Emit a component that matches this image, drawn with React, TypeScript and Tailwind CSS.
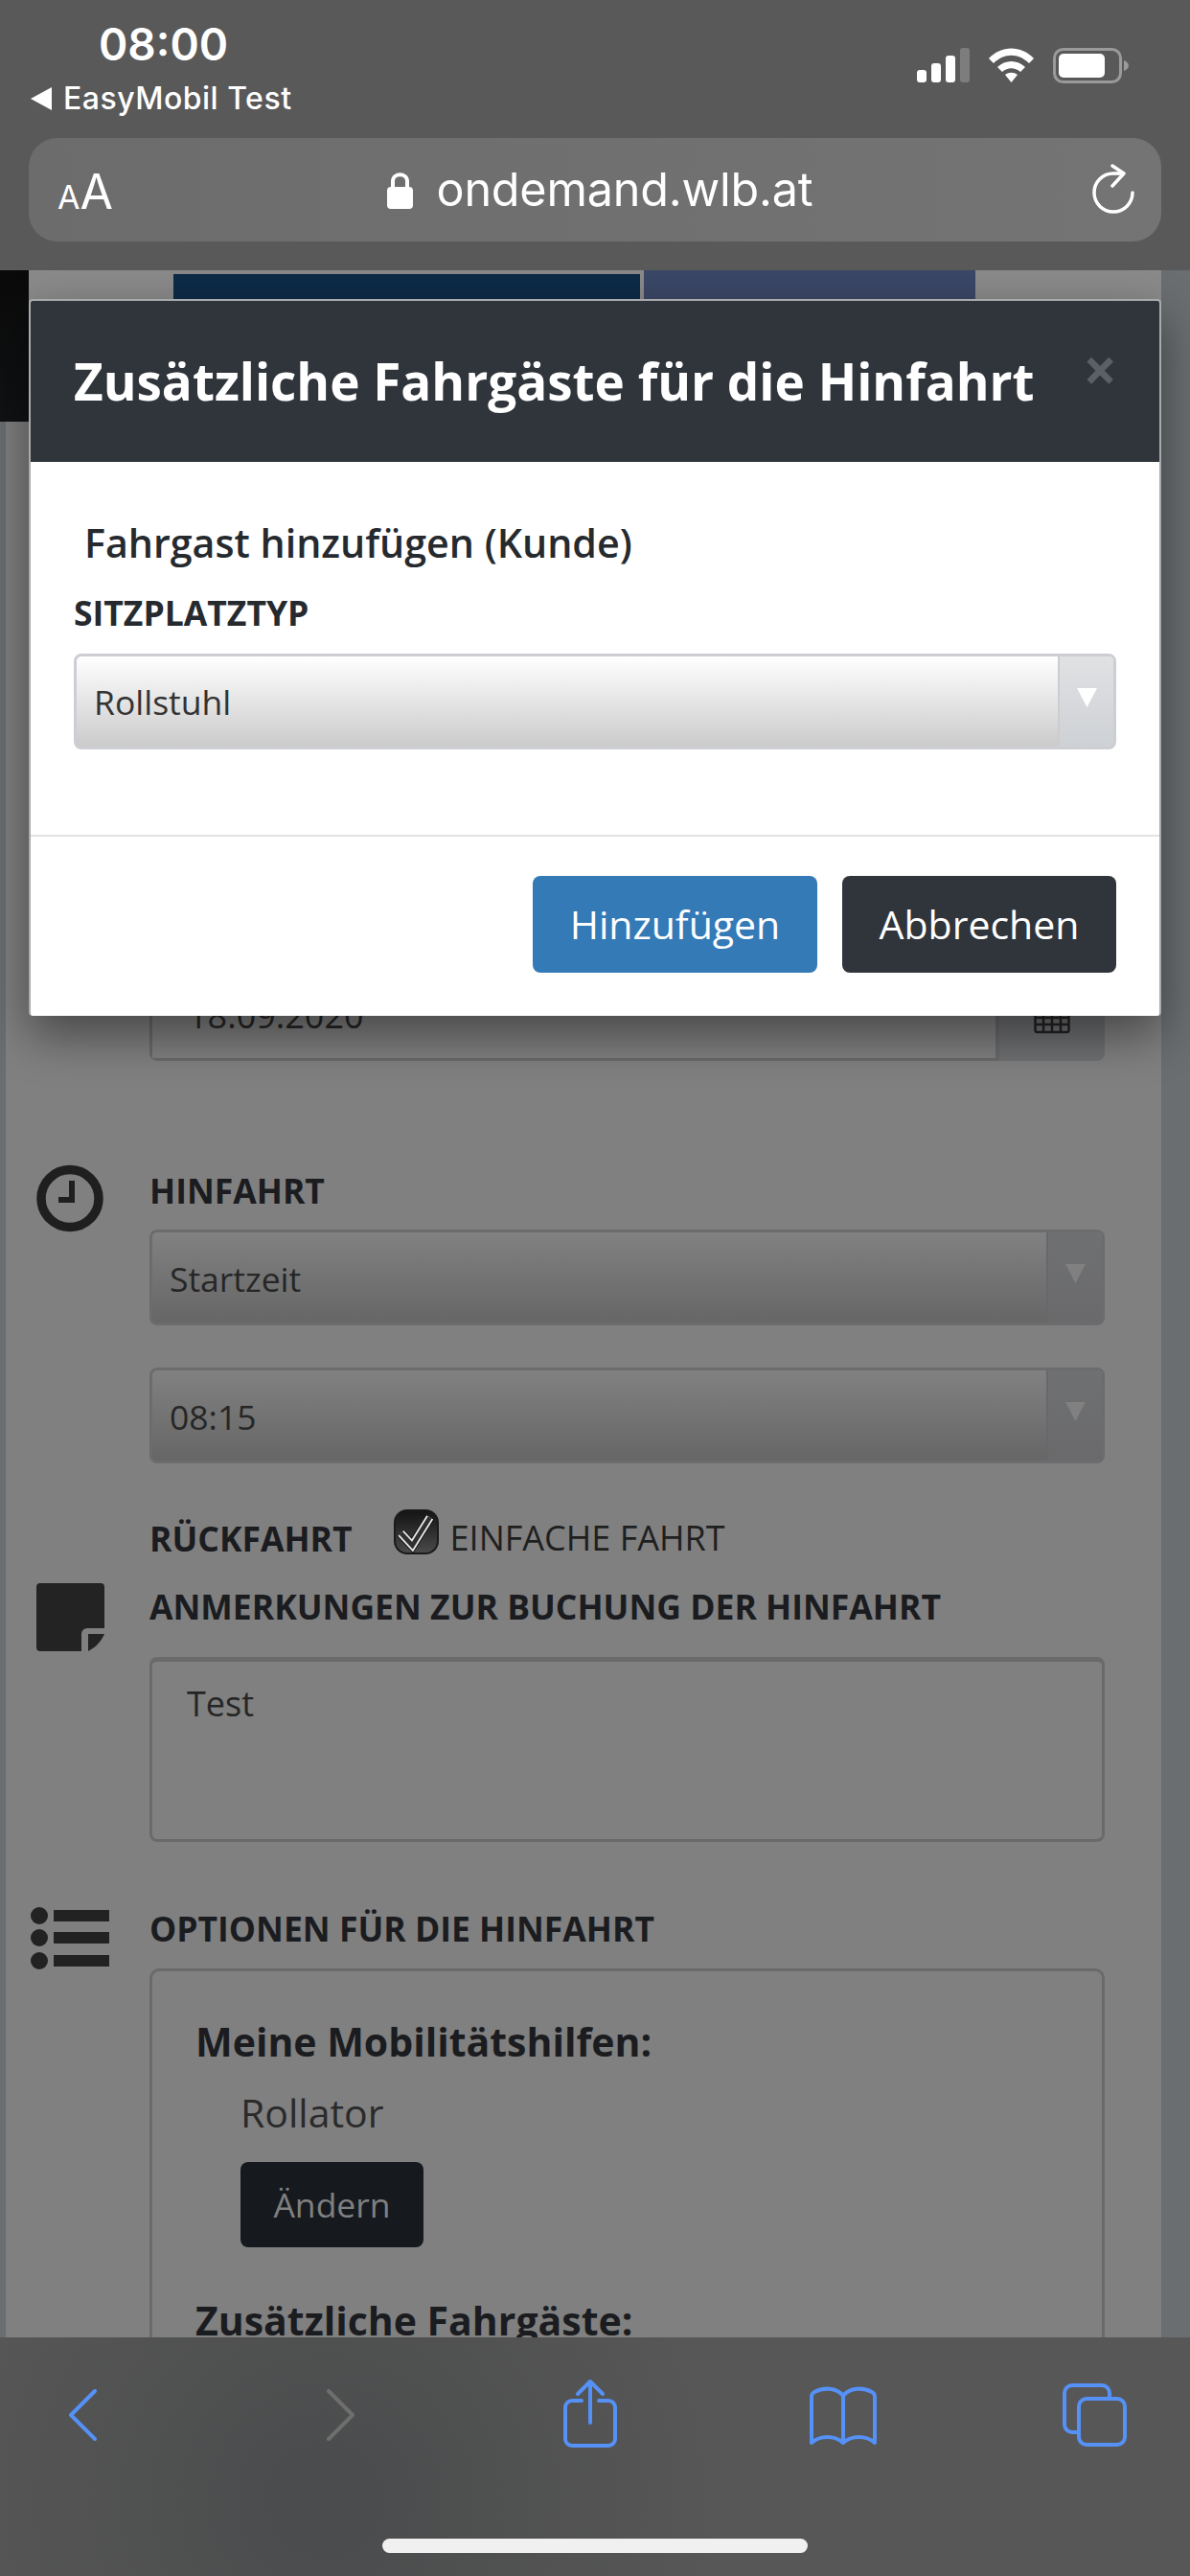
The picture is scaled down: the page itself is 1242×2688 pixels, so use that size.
import React from "react";

function SelectBox({ label, dim }: { label: string; dim?: boolean }) {
  return (
    <div className={dim
      ? "flex h-[100px] w-full overflow-hidden rounded-[8px] border-[3px] border-[#6c6c6e] bg-gradient-to-b from-[#818181] to-[#666666]"
      : "flex h-[100px] w-full overflow-hidden rounded-[8px] border-[3px] border-[#cdced3] bg-gradient-to-b from-[#ffffff] to-[#cbcbcb]"}>
      <div className={dim ? "flex flex-1 items-center pl-[18px] pt-[3px] text-[35.500px] text-[#262626]" : "flex flex-1 items-center pl-[18px] pt-[2px] text-[35.500px] text-[#333333]"}>{label}</div>
      <div className={dim
        ? "flex w-[58px] justify-center border-l-[2px] border-[#686868] bg-gradient-to-b from-[#6f7072] to-[#6a6a6c] pt-[33px]"
        : "flex w-[58px] justify-center border-l-[2px] border-[#cdcdd0] bg-gradient-to-b from-[#e0e1e3] to-[#ced1d5] pt-[33px]"}>
        <svg width="21" height="20" viewBox="0 0 21 20"><path d="M0 0H21L10.500 20Z" fill={dim ? "#808080" : "#ffffff"} /></svg>
      </div>
    </div>
  );
}

function Label({ children }: { children: React.ReactNode }) {
  return <div className="text-[35.5px] font-bold leading-[44px] text-[#1b1c20]">{children}</div>;
}

export default function App() {
  return (
    <div className="relative flex h-[2688px] w-[1242px] flex-col overflow-hidden bg-[#808080] font-['Open_Sans',sans-serif]">
      {/* Browser top */}
      <header className="relative z-20 flex h-[282px] shrink-0 flex-col bg-[#595959] px-[30px] font-['Inter',sans-serif] text-white">
        <div className="flex h-[144px] justify-between">
          <div className="flex flex-col">
            <div className="pl-[73px] pt-[18px] text-[46px] font-semibold leading-[56px]">08:00</div>
            <div className="mt-[10px] flex items-center gap-[12px] pl-[2px] text-[32px] font-medium leading-[38px] tracking-[0.5px]">
              <svg width="22" height="24" viewBox="0 0 22 24"><path d="M22 0V24L0 12Z" fill="#fff" /></svg>
              EasyMobil Test
            </div>
          </div>
          <div className="mr-[34px] flex items-start gap-[20px] pt-[50px]">
            <svg width="55" height="36" viewBox="0 0 55 36">
              <rect x="0" y="23" width="10" height="13" rx="3" fill="#fff" />
              <rect x="15" y="16" width="10" height="20" rx="3" fill="#fff" />
              <rect x="30" y="8" width="10" height="28" rx="3" fill="#fff" />
              <rect x="45" y="0" width="10" height="36" rx="3" fill="#7d7d7d" />
            </svg>
            <svg width="47" height="36" viewBox="0 0 47 36">
              <path d="M0 11C13-3 34-3 47 11L42 16C31 5 16 5 5 16Z" fill="#fff" />
              <path d="M9 20C17 12 30 12 38 20L33 25C27 20 20 20 14 25Z" fill="#fff" />
              <path d="M17 28C21 25 26 25 30 28L23.500 36Z" fill="#fff" />
            </svg>
            <svg width="79" height="37" viewBox="0 0 79 37">
              <rect x="1.500" y="1.500" width="69" height="34" rx="9" fill="none" stroke="#9a9a9a" strokeWidth="3" />
              <rect x="6" y="6" width="48" height="25" rx="5" fill="#fff" />
              <path d="M74 13C77 14 79 16 79 18.500C79 21 77 23 74 24Z" fill="#9a9a9a" />
            </svg>
          </div>
        </div>
        <div className="flex h-[108px] items-center rounded-[30px] bg-gradient-to-r from-[#6c6c6c] to-[#747474] pl-[30px] pr-[28px]">
          <div className="flex w-[120px] items-baseline pt-[4px] font-normal">
            <span className="text-[34px] leading-none">A</span>
            <span className="text-[50px] leading-none">A</span>
          </div>
          <div className="flex flex-1 items-center justify-center gap-[25px] pr-[68px]">
            <svg width="27" height="39" viewBox="0 0 27 39">
              <path d="M6 17V10C6 1 21 1 21 10V17" fill="none" stroke="#fff" strokeWidth="4" />
              <rect x="0" y="16" width="27" height="23" rx="4" fill="#fff" />
            </svg>
            <span className="text-[48.500px] leading-none tracking-[-0.2px]">ondemand.wlb.at</span>
          </div>
          <svg width="44" height="54" viewBox="0 0 44 54" fill="none" stroke="#fff" strokeWidth="3.500" strokeLinecap="round" strokeLinejoin="round">
            <path d="M42 30A20 20 0 1 1 22 10H32" />
            <path d="M21 2L33 10L21 23" />
          </svg>
        </div>
      </header>

      {/* Page content dimmed */}
      <main className="flex min-h-0 flex-1 overflow-hidden bg-[#808080]">
        <div className="flex w-[30px] shrink-0 flex-col">
          <div className="h-[158px] bg-gradient-to-b from-[#0a0a0a] to-[#111214]" />
          <div className="flex flex-1"><div className="w-[6px] bg-[#6a6e71]" /></div>
        </div>
        <div className="flex min-w-0 flex-1 flex-col">
          <div className="flex h-[32px] shrink-0 items-end bg-[#8a8a8a] pl-[151px]">
            <div className="h-[28px] w-[487px] bg-[#0d2a47]" />
            <div className="ml-[4px] h-[32px] w-[346px] bg-[#3a4766]" />
          </div>
          <div className="ml-[126px] mr-[59px] mt-[693px] flex h-[100px] shrink-0 overflow-hidden rounded-[8px]">
            <div className="flex-1 border-[3px] border-r-[4px] border-[#6a6a6a] pl-[37px] pt-[23px] text-[36px] text-[#262626]">18.09.2020</div>
            <div className="flex w-[110px] justify-center bg-[#6f7072] pt-[38px]">
              <svg width="38" height="34" viewBox="0 0 38 34" fill="none" stroke="#232323" strokeWidth="2.500"><rect x="1.500" y="2" width="35" height="30" rx="2" /><path d="M1 10H37M1 17H37M1 24H37M10 2V32M19 2V32M28 2V32" /></svg>
            </div>
          </div>

          <div className="mt-[109px] flex shrink-0 pr-[59px]">
            <div className="w-[126px] shrink-0 pl-[8px]">
              <svg className="-mt-[1px]" width="70" height="71" viewBox="0 0 70 71" fill="none" stroke="#1f1f20">
                <circle cx="35" cy="35.500" r="30" strokeWidth="9.500" />
                <path d="M37 17V37H23" strokeWidth="6" />
              </svg>
            </div>
            <div className="min-w-0 flex-1">
              <div className="pt-[4px]"><Label>HINFAHRT</Label></div>
              <div className="mt-[19px]"><SelectBox label="Startzeit" dim /></div>
              <div className="mt-[44px]"><SelectBox label="08:15" dim /></div>
              <div className="mt-[48px] flex h-[52px] items-end">
                <Label>RÜCKFAHRT</Label>
                <div className="ml-[43px] mr-[12px] flex h-[47px] w-[47px] shrink-0 items-center justify-center self-start rounded-[14px] border-[2px] border-[#1a1a1a] bg-gradient-to-b from-[#151515] to-[#4a4a4a]">
                  <svg width="47" height="47" viewBox="0 0 47 47" fill="none" strokeLinejoin="miter">
                    <path d="M6 25L19 39L39 7" stroke="#111" strokeWidth="11" />
                    <path d="M6 25L19 39L39 7" stroke="#e8e8e8" strokeWidth="9" />
                    <path d="M6 25L19 39L39 7" stroke="#303030" strokeWidth="5" />
                  </svg>
                </div>
                <span className="text-[36px] leading-[44px] text-[#1f1f20]">EINFACHE FAHRT</span>
              </div>
            </div>
          </div>

          <div className="mt-[27px] flex shrink-0 pr-[59px]">
            <div className="w-[126px] shrink-0 pl-[8px]">
              <svg className="-mt-[2px]" width="71" height="71" viewBox="0 0 71 71" fill="#232323">
                <path d="M4 0H67A4 4 0 0 1 71 4V47H53A6 6 0 0 0 47 53V71H4A4 4 0 0 1 0 67V4A4 4 0 0 1 4 0Z" />
                <path d="M54 53H71C68 60 62 67 54 71Z" />
              </svg>
            </div>
            <div className="min-w-0 flex-1">
              <Label>ANMERKUNGEN ZUR BUCHUNG DER HINFAHRT</Label>
              <div className="mt-[31px] h-[193px] rounded-[8px] border-[3px] border-t-[5px] border-[#6a6a6a] pl-[36px] pt-[22px] text-[36px] leading-[44px] text-[#262626]">Test</div>
            </div>
          </div>

          <div className="mt-[68px] flex min-h-0 flex-1 pr-[59px]">
            <div className="w-[126px] shrink-0 pl-[2px]">
              <svg width="82" height="66" viewBox="0 0 82 66" fill="#222">
                <circle cx="9" cy="9" r="9" /><rect x="24" y="3" width="58" height="12" />
                <circle cx="9" cy="32" r="9" /><rect x="24" y="26" width="58" height="12" />
                <circle cx="9" cy="56" r="9" /><rect x="24" y="50" width="58" height="12" />
              </svg>
            </div>
            <div className="flex min-h-0 min-w-0 flex-1 flex-col">
              <Label>OPTIONEN FÜR DIE HINFAHRT</Label>
              <div className="mt-[20px] min-h-0 flex-1 rounded-t-[10px] border-[3px] border-b-0 border-[#6a6a6a] pl-[45px] pt-[47px]">
                <div className="text-[41px] font-bold leading-[52px] text-[#1b1c20]">Meine Mobilitätshilfen:</div>
                <div className="ml-[47px] mt-[22px] text-[41px] leading-[52px] text-[#2a2a2a]">Rollator</div>
                <button className="ml-[47px] mt-[26px] block h-[89px] w-[191px] rounded-[8px] bg-[#161a1f] text-[35.500px] text-[#808080]">Ändern</button>
                <div className="mt-[50px] text-[41px] font-bold leading-[52px] text-[#1b1c20]">Zusätzliche Fahrgäste:</div>
              </div>
            </div>
          </div>
        </div>
        <div className="w-[30px] shrink-0 bg-[#6a6e71]" />
      </main>

      {/* Browser bottom */}
      <footer className="relative z-20 flex h-[249px] shrink-0 flex-col bg-[radial-gradient(circle_at_340px_170px,#4a4b4c_0%,#575757_45%,#575757_100%)]">
        <div className="flex h-[120px] items-start pl-[71px] pt-[43px]">
          <svg width="30" height="54" viewBox="0 0 30 54" fill="none" stroke="#5591f6" strokeWidth="4" strokeLinecap="round" strokeLinejoin="round" className="mt-[11px]"><path d="M28 2L3 27L28 52" /></svg>
          <svg width="30" height="54" viewBox="0 0 30 54" fill="none" stroke="#6e6e6e" strokeWidth="4" strokeLinecap="round" strokeLinejoin="round" className="ml-[240px] mt-[11px]"><path d="M2 2L27 27L2 52" /></svg>
          <svg width="56" height="72" viewBox="0 0 56 72" fill="none" stroke="#5591f6" strokeWidth="4" strokeLinecap="round" strokeLinejoin="round" className="ml-[217px]"><path d="M19 23H9A7 7 0 0 0 2 30V63A7 7 0 0 0 9 70H47A7 7 0 0 0 54 63V30A7 7 0 0 0 47 23H37" /><path d="M28 46V3M15 16L28 3L41 16" /></svg>
          <svg width="70" height="62" viewBox="0 0 70 62" fill="none" stroke="#5591f6" strokeWidth="4" strokeLinecap="round" strokeLinejoin="round" className="ml-[201px] mt-[8px]"><path d="M35 10C28 1 14 1 5 6C3 7 2 9 2 11V59C11 51 26 51 35 59C44 51 59 51 68 59V11C68 9 67 7 65 6C56 1 42 1 35 10V59" /></svg>
          <svg width="67" height="66" viewBox="0 0 67 66" fill="none" stroke="#5591f6" strokeWidth="4" strokeLinejoin="round" className="ml-[194px] mt-[5px]"><path d="M17 51H10A8 8 0 0 1 2 43V10A8 8 0 0 1 10 2H41A8 8 0 0 1 49 10V16" /><rect x="17" y="16" width="48" height="48" rx="8" /></svg>
        </div>
        <div className="mt-[90px] flex justify-center">
          <div className="h-[15px] w-[444px] rounded-full bg-[#f0f0f0]" />
        </div>
      </footer>

      {/* Modal */}
      <div className="absolute left-[30px] top-[312px] z-10 flex h-[748px] w-[1182px] flex-col overflow-hidden rounded-[4px] border-x-[2px] border-t-[2px] border-[#a8abad] bg-white shadow-[0_20px_50px_rgba(0,0,0,0.45)]">
        <div className="flex h-[168px] shrink-0 justify-between bg-[#2f353b] pl-[45px] pr-[44px]">
          <h2 className="pt-[50px] text-[53px] font-bold leading-[68px] text-white">Zusätzliche Fahrgäste für die Hinfahrt</h2>
          <span className="pt-[37px] text-[62px] font-bold leading-[68px] text-[#5a6066]">×</span>
        </div>
        <div className="flex flex-1 flex-col px-[45px]">
          <div className="pl-[11px] pt-[58px] text-[41.200px] font-semibold leading-[52px] text-[#262a2e]">Fahrgast hinzufügen (Kunde)</div>
          <div className="mt-[25px] text-[35.500px] font-bold leading-[44px] text-[#262a2e]">SITZPLATZTYP</div>
          <div className="mt-[21px]"><SelectBox label="Rollstuhl" /></div>
        </div>
        <div className="flex h-[189px] shrink-0 justify-end gap-[26px] border-t-[2px] border-[#e2e3e5] px-[45px] pt-[41px]">
          <button className="h-[101px] w-[297px] rounded-[8px] bg-[#337ab7] text-[41px] text-white">Hinzufügen</button>
          <button className="h-[101px] w-[286px] rounded-[8px] bg-[#2f353b] text-[41px] text-white">Abbrechen</button>
        </div>
      </div>
    </div>
  );
}
